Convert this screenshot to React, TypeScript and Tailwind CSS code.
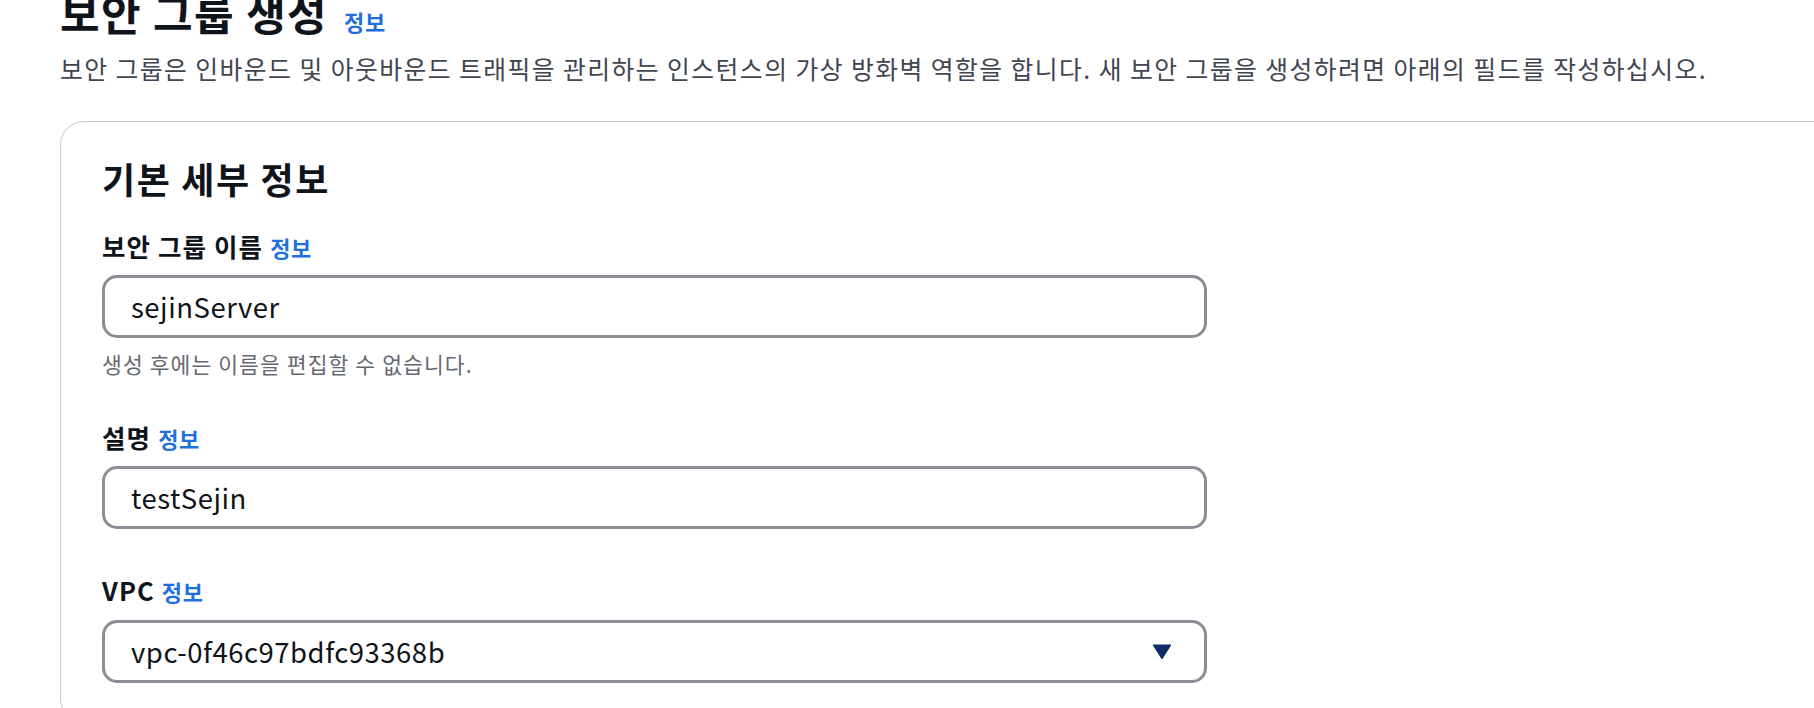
import React from "react";

function Info({ className = "" }: { className?: string }) {
  return <span className={`text-[#1f6fdc] font-bold ${className}`}>정보</span>;
}

function Label({ text }: { text: string }) {
  return (
    <div className="flex items-baseline gap-[7px] leading-none">
      <span className="text-[25.5px] font-bold tracking-[1.1px] text-[#0f141a]">{text}</span>
      <Info className="text-[22px] tracking-[0.6px]" />
    </div>
  );
}

function Field({ value, select = false }: { value: string; select?: boolean }) {
  return (
    <div className="flex h-[63px] w-[1105px] items-center justify-between rounded-[15px] border-[3px] border-[#8c8c94] bg-white pl-[26px] pr-[30px]">
      <span className="text-[27.5px] leading-none text-[#0f141a] tracking-[0.5px]">{value}</span>
      {select && (
        <svg width="20" height="17" viewBox="0 0 20 17" className="mr-[2px]">
          <path d="M1.5 1.5 H18.5 Q19.5 1.5 19 2.5 L10.8 15.5 Q10 16.6 9.2 15.5 L1 2.5 Q0.5 1.5 1.5 1.5 Z" fill="#0f2b68" />
        </svg>
      )}
    </div>
  );
}

export default function App() {
  return (
    <div
      className="h-[708px] w-[1814px] overflow-hidden bg-white pl-[60px]"
      style={{ fontFamily: '"Noto Sans CJK KR", "Noto Sans", sans-serif' }}
    >
      <div className="-mt-[9px] flex items-baseline gap-[16px] leading-none">
        <h1 className="text-[43px] font-bold tracking-[1.4px] text-[#0f141a]">보안 그룹 생성</h1>
        <Info className="text-[22px] tracking-[0.6px]" />
      </div>
      <p className="mt-[22px] text-[24.8px] leading-none tracking-[1.45px] text-[#414550]">
        보안 그룹은 인바운드 및 아웃바운드 트래픽을 관리하는 인스턴스의 가상 방화벽 역할을 합니다. 새 보안 그룹을 생성하려면 아래의 필드를 작성하십시오.
      </p>
      <div className="mt-[40px] h-[602px] w-[1800px] rounded-[24px] border border-[#c6c6cd] pl-[41px] pt-[38px]">
        <h2 className="text-[36px] font-bold leading-none tracking-[1.6px] text-[#0f141a]">기본 세부 정보</h2>
        <div className="mt-[37px]">
          <Label text="보안 그룹 이름" />
        </div>
        <div className="mt-[17px]">
          <Field value="sejinServer" />
        </div>
        <p className="mt-[15px] text-[21.5px] leading-none tracking-[1.1px] text-[#656871]">생성 후에는 이름을 편집할 수 없습니다.</p>
        <div className="mt-[49px]">
          <Label text="설명" />
        </div>
        <div className="mt-[17px]">
          <Field value="testSejin" />
        </div>
        <div className="mt-[48px]">
          <Label text="VPC" />
        </div>
        <div className="mt-[17px]">
          <Field value="vpc-0f46c97bdfc93368b" select />
        </div>
      </div>
    </div>
  );
}
